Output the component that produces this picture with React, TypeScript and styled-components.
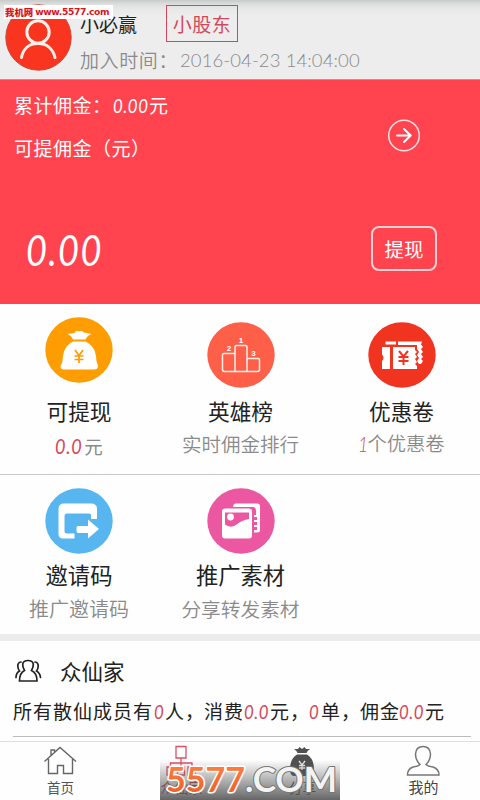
import React from "react";
import styled, { createGlobalStyle } from "styled-components";

const Global = createGlobalStyle`
  * { box-sizing: border-box; }
  body { margin: 0; background: #fff; }
`;

const cjk = `"Noto Sans CJK SC", sans-serif`;
const RED = "#d5485c";
const MUTED = "#8a8a8a";

const Screen = styled.main`
  position: relative;
  width: 480px;
  height: 800px;
  overflow: hidden;
  display: flex;
  flex-direction: column;
  background: #fefefe;
  font-family: ${cjk};
  color: #222;
`;

const Text = styled.div<{ $size: number; $h: number; $color?: string; $gap?: number; $weight?: number }>`
  display: flex;
  align-items: center;
  white-space: pre;
  height: ${(p) => p.$h}px;
  line-height: ${(p) => p.$h}px;
  font-size: ${(p) => p.$size}px;
  font-weight: ${(p) => p.$weight ?? 400};
  letter-spacing: ${(p) => p.$gap ?? 0}px;
  color: ${(p) => p.$color ?? "inherit"};
`;

const Num = styled.span<{ $w: number; $size: number; $gap?: number; $color?: string; $upright?: boolean }>`
  flex: none;
  width: ${(p) => p.$w}px;
  font-family: Lato, sans-serif;
  font-style: ${(p) => (p.$upright ? "normal" : "italic")};
  font-size: ${(p) => p.$size}px;
  letter-spacing: ${(p) => p.$gap ?? 0}px;
  color: ${(p) => p.$color ?? "inherit"};
  transform: ${(p) => (p.$upright ? "none" : "scaleX(0.84)")};
  transform-origin: left center;
`;

const Run = styled.span<{ $w: number }>`
  flex: none;
  width: ${(p) => p.$w}px;
`;

const Header = styled.header`
  height: 80px;
  flex: none;
  display: flex;
  padding-left: 5px;
  background: linear-gradient(#c9cbcb 0, #dcdddd 4px, #e8e8e8 9px, #ededed 16px);
  border-bottom: 1px solid #d9848e;
`;
const Avatar = styled.svg`
  width: 67px;
  height: 67px;
  margin-top: 4px;
  flex: none;
`;
const Profile = styled.div`
  margin-left: 8px;
  padding-top: 5px;
`;
const NameRow = styled.div`
  display: flex;
  align-items: center;
  height: 37px;
`;
const Rank = styled.div`
  width: 72px;
  height: 37px;
  margin-left: 29px;
  border: 1px solid #d5485c;
  display: flex;
  align-items: center;
  justify-content: center;
`;
const Joined = styled(Text)`
  margin-top: 2px;
`;

const Balance = styled.section`
  height: 224px;
  flex: none;
  display: flex;
  justify-content: space-between;
  background: #ff4450;
  color: #fff;
  padding: 13px 43px 0 14px;
`;
const Figures = styled.div`
  display: flex;
  flex-direction: column;
  gap: 19px;
`;
const Amount = styled.div`
  margin: 41px 0 0 12px;
`;
const Actions = styled.div`
  display: flex;
  flex-direction: column;
  align-items: center;
  padding-top: 26px;
`;
const Withdraw = styled.button`
  width: 66px;
  height: 45px;
  margin-top: 73px;
  padding: 0;
  border: 2px solid #ffd0d4;
  border-radius: 8px;
  background: none;
  display: flex;
  align-items: center;
  justify-content: center;
  color: #fff;
  font-family: inherit;
`;

const Grid = styled.section<{ $h: number }>`
  height: ${(p) => p.$h}px;
  flex: none;
  display: grid;
  grid-template-columns: 158px 165px 157px;
  & + & { border-top: 1px solid #c8c8c8; }
`;
const Cell = styled.div<{ $top: number }>`
  display: flex;
  flex-direction: column;
  align-items: center;
  padding-top: ${(p) => p.$top}px;
`;
const Disc = styled.svg`
  width: 68px;
  height: 66px;
  flex: none;
`;
const Title = styled(Text)<{ $mt: number }>`
  margin-top: ${(p) => p.$mt}px;
`;

const Band = styled.div`
  height: 7px;
  flex: none;
  background: #ececec;
`;
const Team = styled.section`
  height: 100px;
  flex: none;
  padding: 15px 0 0 13px;
`;
const TeamHead = styled.div`
  display: flex;
  align-items: center;
  gap: 17px;
`;
const TeamStats = styled(Text)`
  margin-top: 5px;
`;
const Rule = styled.div`
  width: 458px;
  height: 1px;
  margin-top: 5px;
  background: #bcbcbc;
`;

const Nav = styled.nav`
  height: 59px;
  flex: none;
  display: grid;
  grid-template-columns: repeat(4, 121px);
  border-top: 1px solid #dedede;
`;
const Tab = styled.div<{ $color: string }>`
  display: flex;
  flex-direction: column;
  align-items: center;
  padding-top: 3px;
  color: ${(p) => p.$color};
`;

const SiteTag = styled.div`
  position: absolute;
  left: 4px;
  top: 5px;
  width: 109px;
  height: 14px;
  background: #fff;
  color: #d8141c;
  white-space: nowrap;
  display: flex;
  gap: 2px;
  padding-left: 1px;
`;
const SiteName = styled.span`
  font: 900 9.4px/14px ${cjk};
`;
const SiteUrl = styled.span`
  font: bold 9.2px/14px "DejaVu Sans", sans-serif;
  letter-spacing: -0.4px;
`;
const Stamp = styled.svg`
  position: absolute;
  left: 160px;
  top: 760px;
  width: 180px;
  height: 40px;
`;

export default function App() {
  return (
    <>
      <Global />
      <Screen>
        <Header>
          <Avatar viewBox="0 0 67 67">
            <circle cx="33.5" cy="33.5" r="32.7" fill="#f9341f" stroke="#c9453a" />
            <g fill="none" stroke="#fff0e8" strokeWidth="3" strokeLinecap="round">
              <circle cx="33" cy="28" r="11.2" />
              <path d="M16.500 53.500C18 45 24 39.500 33 39.500S48 45 50 53.500" />
            </g>
          </Avatar>
          <Profile>
            <NameRow>
              <Text $size={19} $h={30}>小必赢</Text>
              <Rank><Text $size={19} $h={30} $color={RED} $gap={0.5}>小股东</Text></Rank>
            </NameRow>
            <Joined $size={19} $h={32} $color={MUTED} $gap={0.6} $weight={350}>
              <Run $w={100}>加入时间：</Run>
              <Num $w={182} $size={18.5} $gap={0.1} $upright>2016-04-23 14:04:00</Num>
            </Joined>
          </Profile>
        </Header>

        <Balance>
          <Figures>
            <Text $size={19} $h={24} $gap={0.5}>
              <Run $w={99}>累计佣金：</Run>
              <Num $w={36} $size={20} $gap={0.7}>0.00</Num>
              <span>元</span>
            </Text>
            <Text $size={19} $h={24} $gap={0.5}>可提佣金（元）</Text>
            <Amount>
              <Text $size={43} $h={60}>
                <Num $w={100} $size={43} $gap={1.6}>0.00</Num>
              </Text>
            </Amount>
          </Figures>
          <Actions>
            <svg width="34" height="34" viewBox="0 0 34 34" fill="none" stroke="#ffe3e5" strokeLinecap="round" strokeLinejoin="round">
              <circle cx="17" cy="16.500" r="15.300" strokeWidth="1.500" />
              <path d="M10 16.500H23.500M17 10L23.700 16.500L17 23" strokeWidth="2" stroke="#fff" />
            </svg>
            <Withdraw><Text $size={19.5} $h={30}>提现</Text></Withdraw>
          </Actions>
        </Balance>

        <Grid $h={170}>
          <Cell $top={13}>
            <Disc viewBox="0 0 68 66">
              <ellipse cx="34" cy="33" rx="33.700" ry="32.700" fill="#fd9d02" />
              <path fill="#fff" d="M22.500 17L29.500 16Q31 12.500 34 14.500Q37 12.500 39 15.500L46.500 17Q42 18.500 40.500 22.500H28Q26.500 18.500 22.500 17ZM28 24.500H40.500Q50 29 51 39Q51 44 53 49Q53 52.500 49 52.500H19Q15.500 52.500 15.500 49Q18 45 18 39Q19 29 28 24.500Z" />
              <path fill="none" stroke="#fd9d02" strokeWidth="1.700" d="M30 33L34 38.500L38 33M34 38.500V46M29.500 39H38.500M29.500 42.500H38.500" />
            </Disc>
            <Title $mt={13} $size={21.7} $h={30}>可提现</Title>
            <Text $size={18.5} $h={41} $color={MUTED}>
              <Num $w={29} $size={21.5} $gap={0.9} $color={RED}>0.0</Num>
              <span>元</span>
            </Text>
          </Cell>
          <Cell $top={18}>
            <Disc viewBox="0 0 68 66">
              <ellipse cx="34" cy="33" rx="33.700" ry="32.700" fill="#fd5f49" />
              <g fill="none" stroke="#fff0ea" strokeWidth="1.500" strokeLinejoin="round">
                <path d="M28 31.500H17Q15.500 31.500 15.500 33V47.500Q15.500 49.500 17.500 49.500H50.500Q52.500 49.500 52.500 47.500V38Q52.500 36.500 51 36.500H40M28 49.500V25Q28 23.500 29.500 23.500H38.500Q40 23.500 40 25V49.500" />
              </g>
              <g fill="#fff" fontFamily="Liberation Sans, sans-serif" fontWeight="bold" fontSize="8" textAnchor="middle">
                <text x="22" y="29">2</text><text x="34" y="21">1</text><text x="46.500" y="34">3</text>
              </g>
            </Disc>
            <Title $mt={8} $size={21.7} $h={30}>英雄榜</Title>
            <Text $size={19.5} $h={35} $weight={350} $color={MUTED}>实时佣金排行</Text>
          </Cell>
          <Cell $top={18}>
            <Disc viewBox="0 0 68 66">
              <ellipse cx="34" cy="33" rx="33.700" ry="32.700" fill="#f03420" />
              <path fill="#fff" d="M17.500 19.500H28V22.500H17.500ZM30 19.500H54L53 22.500L55 25L53 27L55 30L53 32L55 35L53 37L55 39L53 42H51L49 39L51 36L49 33L51 30L49 27V23H30ZM14 25H22V47H14V39Q17 36 14 32.500ZM25 25H47V28L49 30L47 32L49 35L47 37L49 40L47 42L49 44V47H25Z" />
              <path fill="none" stroke="#f03420" strokeWidth="2" d="M31 29L35.500 34.500L40 29M35.500 34V43M30.500 35H40.500M30.500 39H40.500" />
            </Disc>
            <Title $mt={8} $size={21.7} $h={30}>优惠卷</Title>
            <Text $size={19.3} $h={35} $weight={350} $color={MUTED}>
              <Num $w={9} $size={21} $color={RED}>1</Num>
              <span>个优惠卷</span>
            </Text>
          </Cell>
        </Grid>
        <Grid $h={160}>
          <Cell $top={13}>
            <Disc viewBox="0 0 68 66">
              <ellipse cx="34" cy="33" rx="33.700" ry="32.700" fill="#57b6ef" />
              <path fill="#fff" d="M19 15.500H46Q52 15.500 52 21V31H46V27Q46 25.500 44 25.500H22Q19.500 25.500 19.500 28V43Q19.500 45.500 22 45.500H29.500V50.500H18Q13.500 50.500 13.500 46V21Q13.500 15.500 19 15.500Z" />
              <path fill="#fff" d="M33 38H43V31.500L54 41L43 50.500V45H33Q31.500 45 31.500 43V40Q31.500 38 33 38Z" />
            </Disc>
            <Title $mt={3} $size={22.3} $h={34}>邀请码</Title>
            <Text $size={20} $h={36} $weight={350} $color={MUTED}>推广邀请码</Text>
          </Cell>
          <Cell $top={13}>
            <Disc viewBox="0 0 68 66">
              <ellipse cx="34" cy="33" rx="33.700" ry="32.700" fill="#ec57a2" />
              <path fill="#fff" d="M29 15.500H50Q53 15.500 53 18.500V42Q53 44.500 50 44.500H47V42H50V39H47V37H50V34H47V32H50V29H47V27H49V23Q49 19 46 19H26Q26 15.500 29 15.500Z" />
              <path fill="#fff" fillRule="evenodd" d="M18 20.500H42Q45 20.500 45 23.500V47.500Q45 50.500 42 50.500H18Q15 50.500 15 47.500V23.500Q15 20.500 18 20.500ZM18 24.500V36.500Q23 40.500 29 37Q35 32 42 31V24.500Z" />
              <circle cx="23.500" cy="29" r="3.400" fill="#fff" />
            </Disc>
            <Title $mt={3} $size={22.3} $h={34}>推广素材</Title>
            <Text $size={19.7} $h={36} $weight={350} $color={MUTED}>分享转发素材</Text>
          </Cell>
        </Grid>
        <Band />
        <Team>
          <TeamHead>
            <svg width="30" height="28" viewBox="0 0 30 28" fill="none" stroke="#222" strokeWidth="1.700" strokeLinecap="round">
              <path d="M11.500 13.500Q9.500 10 9.700 7Q10.500 3.500 15 3.500T20.300 7Q20.500 10 18.500 13.500Q24 16 24 24H6.500Q6.500 16 11.500 13.500Z" />
              <path d="M8 5Q4.500 5.500 4.800 9.500Q5 12 6.500 14Q3 16 3 20.500M22 5Q25.500 5.500 25.200 9.500Q25 12 23.500 14Q27 16 27.500 20.500" />
            </svg>
            <Text $size={21.5} $h={30}>众仙家</Text>
          </TeamHead>
          <TeamStats $size={19} $h={40} $gap={1}>
            <Run $w={141}>所有散仙成员有</Run>
            <Num $w={11} $size={20} $color={RED}>0</Num>
            <Run $w={39}>人，</Run>
            <Run $w={40}>消费</Run>
            <Num $w={26} $size={20} $gap={0.7} $color={RED}>0.0</Num>
            <Run $w={39}>元，</Run>
            <Num $w={12} $size={20} $color={RED}>0</Num>
            <Run $w={39}>单，</Run>
            <Run $w={39}>佣金</Run>
            <Num $w={26} $size={20} $gap={0.7} $color={RED}>0.0</Num>
            <Run $w={20}>元</Run>
          </TeamStats>
          <Rule />
        </Team>

        <Nav>
          <Tab $color="#555">
            <svg width="36" height="32" viewBox="0 0 36 32" fill="none" stroke="#666" strokeWidth="1.400">
              <path d="M1.500 16.500L17 2.500L33 16.500M5.500 14V28.500H14.500V20.500H20.500V28.500H29.500V14M8 10.500V5H11.500V7.500" />
            </svg>
            <Text $size={13.5} $h={20}>首页</Text>
          </Tab>
          <Tab $color="#b94460">
            <svg width="36" height="32" viewBox="0 0 36 32" fill="none" stroke="#dc5068" strokeWidth="1.300">
              <path d="M12 1.500H22V13H12ZM17 13V19M6.500 22V18H28V22M17 18V22M3 22H10V30H3ZM13.500 22H20.500V30H13.500ZM24 22H31V30H24Z" />
            </svg>
            <Text $size={14} $h={20}>众仙家</Text>
          </Tab>
          <Tab $color="#444">
            <svg width="36" height="32" viewBox="0 0 36 32" fill="#505050">
              <path d="M9 4L13 4L14.500 2L17 4L19.500 2L21 4L25 4Q22 6 21.500 8H12.500Q12 6 9 4ZM12 9.500H22Q29 14 29 24Q29 31 25 31H9Q5 31 5 24Q5 14 12 9.500Z" />
              <path d="M14 16L17 20L20 16M17 20V25M14 20.500H20M14 23H20" fill="none" stroke="#eee" strokeWidth="1.300" />
            </svg>
            <Text $size={13.5} $h={20}>分享</Text>
          </Tab>
          <Tab $color="#444">
            <svg width="36" height="32" viewBox="0 0 36 32" fill="none" stroke="#777" strokeWidth="1.500">
              <path d="M14 19.500Q9.500 15 9.500 9Q10 1.500 17 1.500T24.500 9Q24.500 15 20 19.500Q22 21.500 27 22Q33 24 33 30H1.500Q1.500 24 7 22Q12 21.500 14 19.500Z" />
            </svg>
            <Text $size={15} $h={20}>我的</Text>
          </Tab>
        </Nav>

        <SiteTag>
          <SiteName>我机网</SiteName>
          <SiteUrl>www.5577.com</SiteUrl>
        </SiteTag>
        <Stamp viewBox="0 0 180 40">
          <defs>
            <linearGradient id="shade" x1="0" y1="0" x2="0" y2="1">
              <stop offset="0" stopColor="#555" stopOpacity="0" />
              <stop offset="1" stopColor="#555" stopOpacity="0.9" />
            </linearGradient>
            <linearGradient id="ember" x1="0" y1="0" x2="0" y2="1">
              <stop offset="0" stopColor="#ff8548" />
              <stop offset="1" stopColor="#f05a20" />
            </linearGradient>
          </defs>
          <rect width="180" height="40" fill="url(#shade)" />
          <g fontFamily="Lato, sans-serif" fontWeight="bold" fontSize="34" strokeLinejoin="round" paintOrder="stroke">
            <text x="6" y="32" textLength="79" lengthAdjust="spacingAndGlyphs" fill="url(#ember)" stroke="#fff" strokeWidth="3">5577</text>
            <text x="85" y="32" textLength="92" lengthAdjust="spacingAndGlyphs" fill="#f3f3f3" stroke="#777" strokeWidth="2">.COM</text>
          </g>
        </Stamp>
      </Screen>
    </>
  );
}
